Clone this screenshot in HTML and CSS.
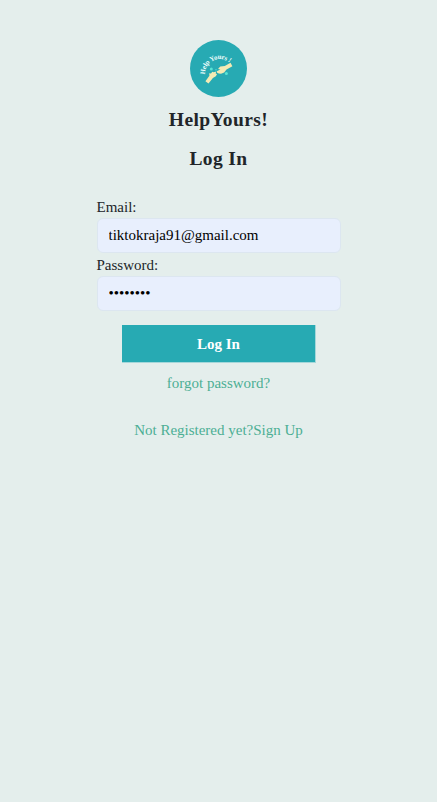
FILE: index.html
```html
<!DOCTYPE html>
<html lang="en">

<head>
    <meta charset="UTF-8">
    <meta name="viewport" content="width=device-width, initial-scale=1.0">
    <title>HelpYours! - Log In</title>
    <link rel="stylesheet" href="styles.css">
</head>

<body>
    <main class="login">
        <svg class="logo" viewBox="0 0 57 57" aria-hidden="true">
            <defs>
                <path id="logo-arc" d="M15 34.5 A14.8 14.8 0 0 1 42 25.5" />
            </defs>
            <circle cx="28.5" cy="28.5" r="28.5" fill="#27aab3" />
            <text class="logo-text">
                <textPath href="#logo-arc">Help Yours !</textPath>
            </text>
            <!-- hands -->
            <path d="M15.4 41.3 L19.4 35.8 L19.2 33.2 L21 33.6 L22.3 31.8 L23.6 32.2 L26.4 31.4 L25.6 33.3 L27 34.2 L25.8 36.2 L22.9 38 L18.5 43.6 Z" fill="#f4eab4" />
            <path d="M40.5 22.8 L34.8 26 L30.3 26.6 L28 29 L30.4 29.4 L26.8 31.2 L27.2 32.7 L28.8 33.6 L31 33.7 L34.2 32.6 L36.5 29.5 L42.4 26.3 Z" fill="#f4eab4" />
            <circle cx="21.3" cy="29" r="1.5" fill="#58e4d5" />
            <circle cx="36.4" cy="33.4" r="1.5" fill="#58e4d5" />
            <circle cx="26" cy="29.8" r=".7" fill="#58e4d5" />
        </svg>
        <h1 class="title">HelpYours!</h1>
        <h2 class="title">Log In</h2>

        <form class="login-form">
            <label for="email">Email:</label>
            <input type="email" id="email" value="tiktokraja91@gmail.com">
            <label for="password">Password:</label>
            <input type="password" id="password" value="password">
            <button type="submit" class="login-btn">Log In</button>
        </form>

        <a href="#" class="link">forgot password?</a>
        <a href="#" class="link signup">Not Registered yet?Sign Up</a>
    </main>
</body>

</html>
```

FILE: styles.css
```css
* {
    margin: 0;
    padding: 0;
    box-sizing: border-box;
}

body {
    min-height: 100vh;
    background-color: #e4eeec;
    color: #212529;
    font-family: "Liberation Serif", "Times New Roman", serif;
    font-size: 15px;
    line-height: 23px;
}

.login {
    display: flex;
    flex-direction: column;
    align-items: center;
    padding-top: 40px;
}

.logo {
    width: 57px;
    height: 57px;
    margin-bottom: 11px;
}

.logo-text {
    font-size: 6.8px;
    font-weight: bold;
    letter-spacing: -0.2px;
    fill: #f2fffd;
}

.title {
    font-size: 19.5px;
    font-weight: bold;
    line-height: 24px;
    letter-spacing: 0.4px;
    margin-bottom: 15px;
}

.login-form {
    display: flex;
    flex-direction: column;
    width: 244px;
    margin-top: 9px;
}

.login-form label {
    margin-top: 1px;
    height: 22px;
}

.login-form input {
    height: 35px;
    padding: 0 11px;
    border: 1px solid #dce6f0;
    border-radius: 6px;
    background-color: #e8effd;
    color: #000;
    font-family: inherit;
    font-size: 15px;
}

.login-btn {
    align-self: center;
    width: 194px;
    height: 38px;
    margin-top: 14px;
    padding: 2px 0 0 1px;
    border: 1px solid #a5d7da;
    border-width: 0 1px 1px 0;
    background-color: #27aab3;
    color: #fff;
    font-family: inherit;
    font-size: 15px;
    font-weight: bold;
}

.link {
    margin-top: 9px;
    color: #4cae94;
    text-decoration: none;
}

.signup {
    margin-top: 24px;
}
```
